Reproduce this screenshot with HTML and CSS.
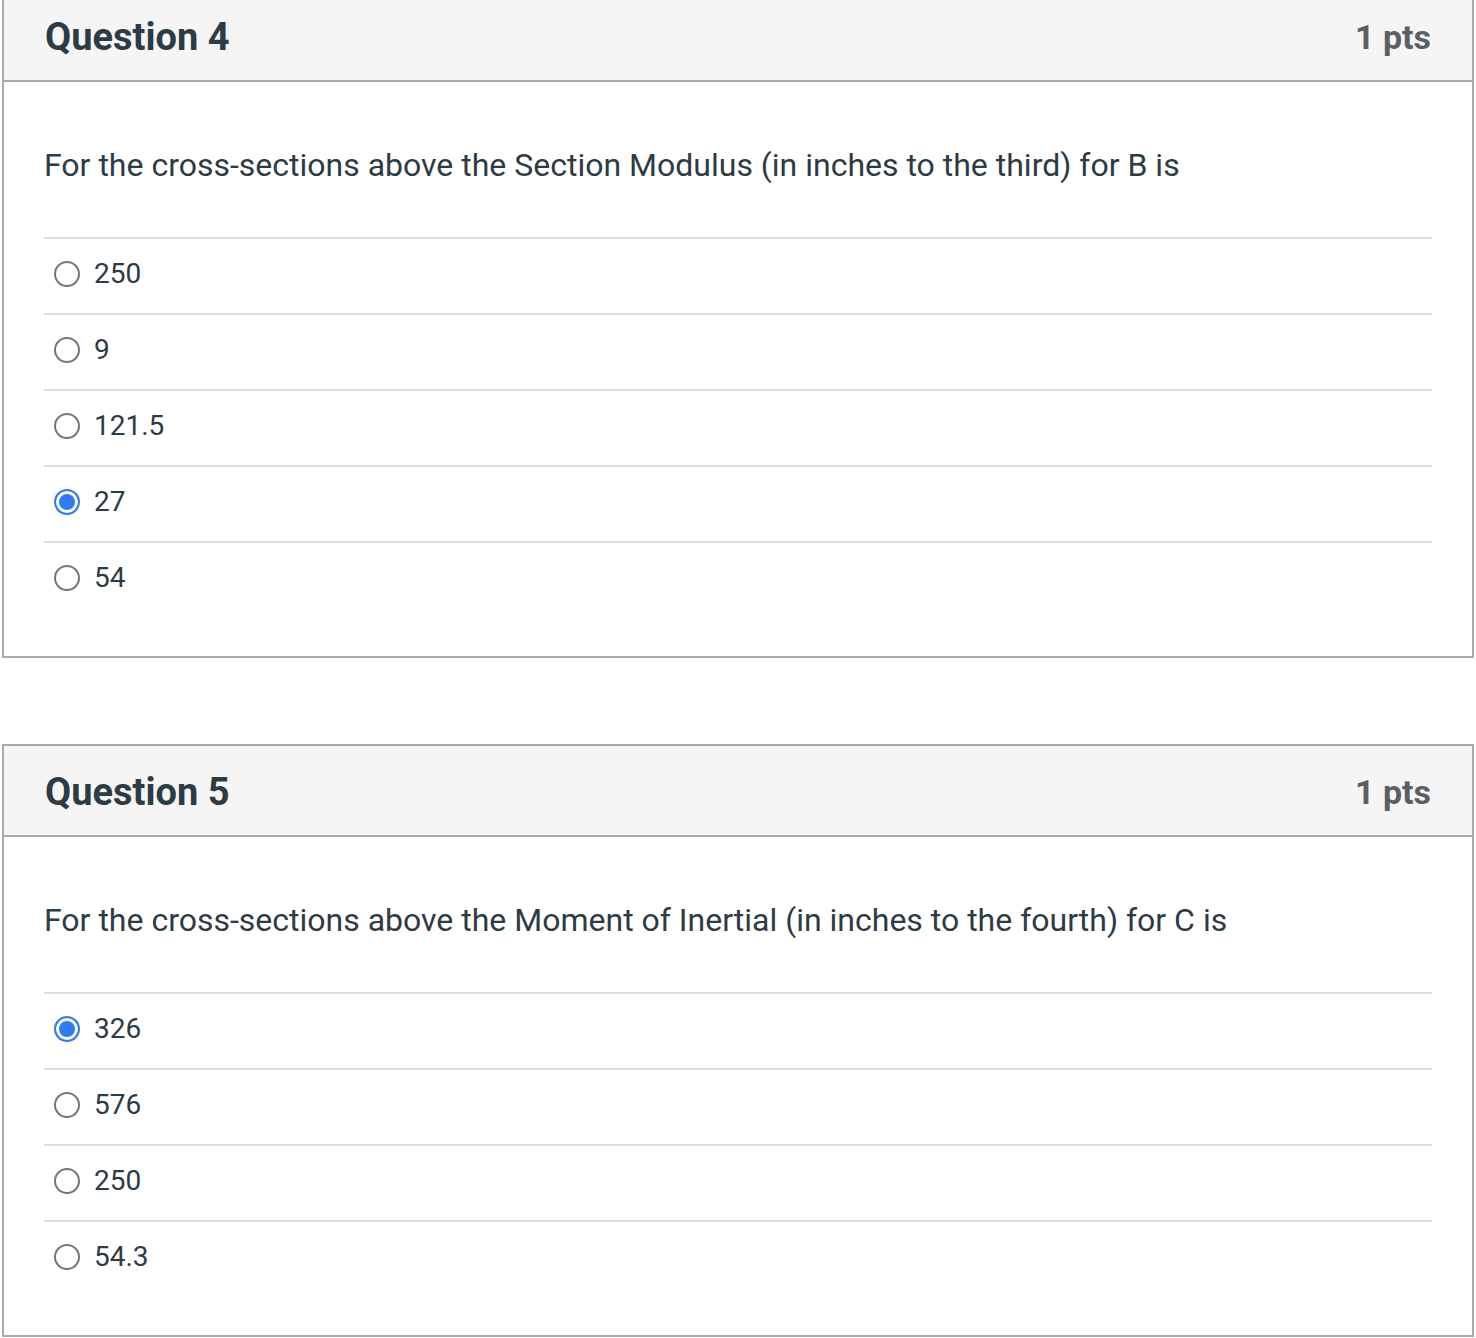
FILE: index.html
```html
<!DOCTYPE html>
<html>
<head>
<meta charset="utf-8">
<link rel="stylesheet" href="styles.css">
</head>
<body>
<div class="page">
  <div class="card">
    <div class="card-header">
      <div class="title">Question 4</div>
      <div class="pts">1 pts</div>
    </div>
    <div class="card-body">
      <div class="question">For the cross-sections above the Section Modulus (in inches to the third) for B is</div>
      <div class="options">
        <div class="option"><span class="radio"></span><span class="label">250</span></div>
        <div class="option"><span class="radio"></span><span class="label">9</span></div>
        <div class="option"><span class="radio"></span><span class="label">121.5</span></div>
        <div class="option"><span class="radio checked"></span><span class="label">27</span></div>
        <div class="option"><span class="radio"></span><span class="label">54</span></div>
      </div>
    </div>
  </div>
  <div class="card">
    <div class="card-header">
      <div class="title">Question 5</div>
      <div class="pts">1 pts</div>
    </div>
    <div class="card-body">
      <div class="question">For the cross-sections above the Moment of Inertial (in inches to the fourth) for C is</div>
      <div class="options">
        <div class="option"><span class="radio checked"></span><span class="label">326</span></div>
        <div class="option"><span class="radio"></span><span class="label">576</span></div>
        <div class="option"><span class="radio"></span><span class="label">250</span></div>
        <div class="option"><span class="radio"></span><span class="label">54.3</span></div>
      </div>
    </div>
  </div>
</div>
</body>
</html>
```
FILE: styles.css
```css
html, body {
  margin: 0;
  padding: 0;
  background: #fff;
}
body {
  font-family: Roboto, "Liberation Sans", Arial, sans-serif;
  color: #2d3b45;
}
.page {
  margin: -11px 2px 0 2px;
  display: flex;
  flex-direction: column;
  gap: 86px;
}
.card {
  border: 2px solid #aaaaaa;
  background: #fff;
}
.card-header {
  height: 89px;
  background: #f5f5f5;
  border-bottom: 2px solid #aaaaaa;
  display: flex;
  align-items: center;
  justify-content: space-between;
  padding: 0 41px 0 41px;
}
.title {
  font-size: 38px;
  font-weight: 700;
  color: #2d3b45;
  line-height: 1;
  margin-top: 2px;
}
.pts {
  font-size: 34px;
  font-weight: 700;
  color: #5a5f63;
  line-height: 1;
  margin-top: 2px;
}
.card-body {
  padding: 61px 40px 39px 40px;
}
.question {
  font-size: 32px;
  line-height: 45px;
  margin-bottom: 49px;
}
.options {
  display: flex;
  flex-direction: column;
}
.option {
  border-top: 2px solid #dddddd;
  display: flex;
  align-items: center;
  padding-left: 10px;
  padding-bottom: 4px;
  box-sizing: content-box;
  height: 70px;
}
.radio {
  width: 22px;
  height: 22px;
  border: 2px solid #767676;
  border-radius: 50%;
  flex: none;
  margin-right: 14px;
  box-sizing: content-box;
}
.radio.checked {
  border-color: #2f7bf5;
  background: #2f7bf5;
  box-shadow: inset 0 0 0 3px #fff;
}
.label {
  font-size: 28px;
  line-height: 1;
}
```
